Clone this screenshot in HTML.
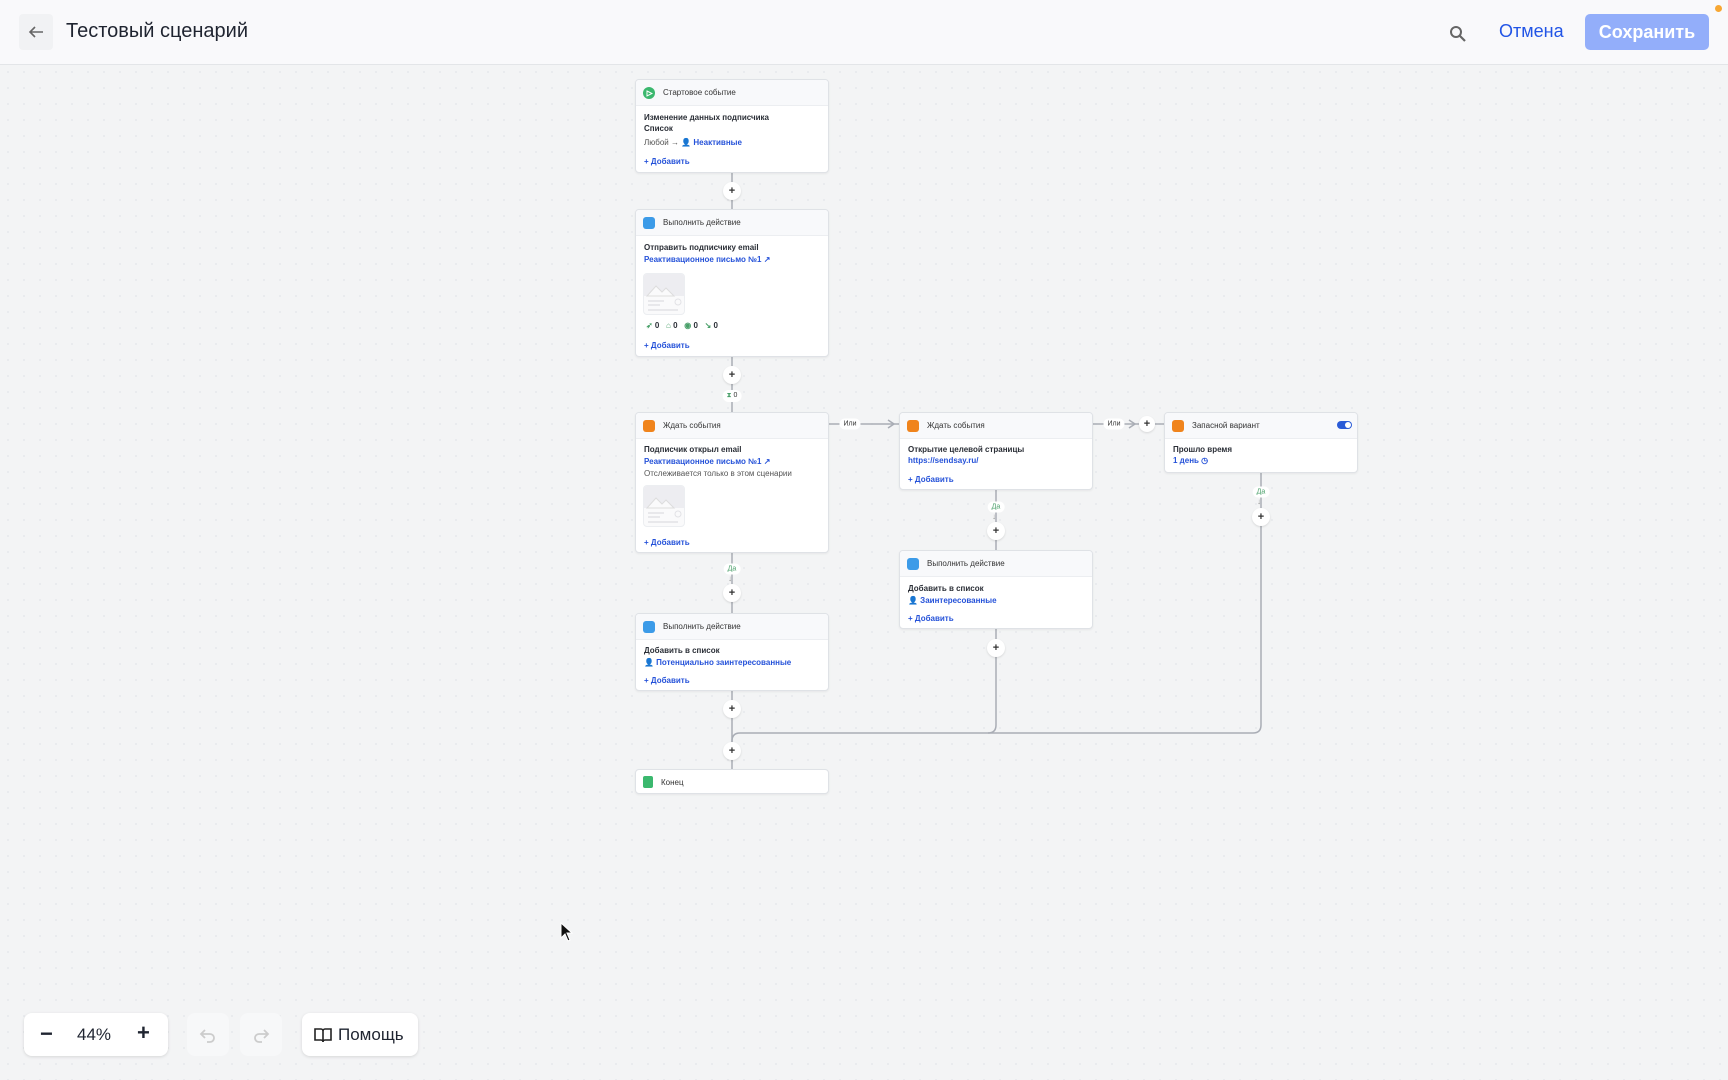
<!DOCTYPE html>
<html><head><meta charset="utf-8"><style>
*{box-sizing:border-box;margin:0;padding:0}
body{width:1728px;height:1080px;overflow:hidden;background:#f3f4f5;font-family:"Liberation Sans",sans-serif;position:relative;color:#1f2430;
background-image:radial-gradient(#e6e8eb 0.8px,transparent 0.8px);background-size:16px 16px}
.hdr{position:absolute;left:0;top:0;width:1728px;height:65px;background:#f9f9fb;border-bottom:1px solid #e3e5e8}
.a{position:absolute}
.card{position:absolute;background:#fff;border:1px solid #dfe2e6;border-radius:4px;box-shadow:0 1px 2px rgba(0,0,0,.06);overflow:hidden}
.ch{height:26px;background:#f8f9fb;border-bottom:1px solid #eceef1;position:relative;font-size:8px;color:#333;line-height:26px;padding-left:27px}
.ic{position:absolute;left:7px;top:7px;width:12px;height:12px;border-radius:3px}
.t{position:absolute;font-size:8px;white-space:nowrap;line-height:10px}
.b{font-weight:bold;color:#2a2e36}
.l{color:#2552d9;font-weight:bold}
.g{color:#555}
.vl{position:absolute;width:1.5px;background:#a9adb5}
.hl{position:absolute;height:1.5px;background:#a9adb5}
.pl{position:absolute;width:18px;height:18px;margin:-9px 0 0 -9px;border-radius:50%;background:#fff;box-shadow:0 1px 2px rgba(0,0,0,.12);font-size:11px;line-height:18px;text-align:center;color:#333;font-weight:bold}
.pill{position:absolute;background:#fff;border-radius:6px;font-size:7px;color:#4aa06a;padding:2px 4px;transform:translate(-50%,-50%)}
.pill2{position:absolute;background:#fff;border-radius:6px;font-size:7px;color:#333;padding:2px 4px;transform:translate(-50%,-50%)}
.img{position:absolute;width:42px;height:42px;border:1px solid #eceef1;border-radius:4px;background:#fafafb;overflow:hidden}
.btn{position:absolute;background:#fff;border-radius:8px;box-shadow:0 1px 3px rgba(0,0,0,.12)}
</style></head><body>
<div class="hdr">
  <div class="a" style="left:19px;top:14px;width:34px;height:36px;background:#f1f2f4;border-radius:4px"></div>
  <svg class="a" style="left:27px;top:24px" width="18" height="16" viewBox="0 0 18 16"><path d="M16 8H3M8 3L3 8l5 5" stroke="#666" stroke-width="1.6" fill="none"/></svg>
  <div class="a" style="left:66px;top:20px;font-size:20px;color:#1f2430">Тестовый сценарий</div>
  <svg class="a" style="left:1449px;top:25px" width="18" height="18" viewBox="0 0 18 18"><circle cx="7" cy="7" r="5" stroke="#666" stroke-width="2" fill="none"/><path d="M11 11l5 5" stroke="#666" stroke-width="2.2"/></svg>
  <div class="a" style="left:1499px;top:21px;font-size:18px;color:#2255e6">Отмена</div>
  <div class="a" style="left:1585px;top:14px;width:124px;height:36px;background:#93aefa;border-radius:5px;color:#fff;font-size:18px;font-weight:bold;text-align:center;line-height:36px">Сохранить</div>
  <div class="a" style="left:1715px;top:5px;width:7px;height:7px;border-radius:50%;background:#f7a733"></div>
</div>

<!-- lines -->
<svg class="a" style="left:0;top:0" width="1728" height="1080">
<g stroke="#a9adb5" stroke-width="1.5" fill="none">
<path d="M732 173V209M732 357V412M732 553V613M732 691V769"/>
<path d="M996 490V550"/>
<path d="M996 629V725Q996 733 988 733"/>
<path d="M732 745V741Q732 733 740 733H1253Q1261 733 1261 725V473"/>
<path d="M829 424H899M1093 424H1164"/>
<path d="M888 420l6 4-6 4M1129 420l6 4-6 4"/>
</g></svg>
<div class="pill2" style="left:850px;top:424px">Или</div>
<div class="pill2" style="left:1114px;top:424px">Или</div>
<div class="pl" style="left:1147px;top:424px;width:16px;height:16px;margin:-8px 0 0 -8px;line-height:16px">+</div>

<div class="pl" style="left:732px;top:191px">+</div>
<div class="pl" style="left:732px;top:375px">+</div>
<div class="pill2" style="left:732px;top:396px;color:#333"><span style="color:#4aa06a">⧗</span> 0</div>
<div class="pill" style="left:732px;top:569px">Да</div>
<div class="t" style="left:728px;top:574px;color:#999">↓</div>
<div class="pl" style="left:732px;top:593px">+</div>
<div class="pl" style="left:732px;top:709px">+</div>
<div class="pl" style="left:732px;top:751px">+</div>
<div class="pill" style="left:996px;top:507px">Да</div>
<div class="t" style="left:992px;top:512px;color:#999">↓</div>
<div class="pl" style="left:996px;top:531px">+</div>
<div class="pl" style="left:996px;top:648px">+</div>
<div class="pill" style="left:1261px;top:492px">Да</div>
<div class="t" style="left:1257px;top:497px;color:#999">↓</div>
<div class="pl" style="left:1261px;top:517px">+</div>

<!-- card1 -->
<div class="card" style="left:635px;top:79px;width:194px;height:94px">
  <div class="ch"><div class="ic" style="background:#3bb86e;border-radius:50%"></div><svg class="a" style="left:10px;top:10px" width="7" height="7"><path d="M1 1l5 2.5L1 6z" fill="none" stroke="#fff" stroke-width="1"/></svg>Стартовое событие</div>
  <div class="t b" style="left:8px;top:33px">Изменение данных подписчика</div>
  <div class="t b" style="left:8px;top:44px">Список</div>
  <div class="t g" style="left:8px;top:58px">Любой → <span class="l">👤 Неактивные</span></div>
  <div class="t l" style="left:8px;top:77px">+ Добавить</div>
</div>
<!-- card2 -->
<div class="card" style="left:635px;top:209px;width:194px;height:148px">
  <div class="ch"><div class="ic" style="background:#3c9be8"></div>Выполнить действие</div>
  <div class="t b" style="left:8px;top:33px">Отправить подписчику email</div>
  <div class="t l" style="left:8px;top:45px">Реактивационное письмо №1 ↗</div>
  <div class="img" style="left:7px;top:63px"><svg width="42" height="42"><rect x="0" y="0" width="42" height="22" fill="#ededf1"/><path d="M3 22l9-10 6 6 4-4 8 8z" fill="#fafafb" stroke="#ddd"/><path d="M4 27h16M4 31h12M4 36h30" stroke="#e2e2e6" stroke-width="1.5"/><circle cx="34" cy="28" r="3" fill="none" stroke="#e2e2e6"/></svg></div>
  <div class="t b" style="left:10px;top:111px"><span style="color:#4aa06a">➶</span> 0 &nbsp; <span style="color:#4aa06a">⌂</span> 0 &nbsp; <span style="color:#4aa06a">◉</span> 0 &nbsp; <span style="color:#4aa06a">↘</span> 0</div>
  <div class="t l" style="left:8px;top:131px">+ Добавить</div>
</div>
<!-- card3 -->
<div class="card" style="left:635px;top:412px;width:194px;height:141px">
  <div class="ch"><div class="ic" style="background:#f0841c"></div>Ждать события</div>
  <div class="t b" style="left:8px;top:32px">Подписчик открыл email</div>
  <div class="t l" style="left:8px;top:44px">Реактивационное письмо №1 ↗</div>
  <div class="t g" style="left:8px;top:56px">Отслеживается только в этом сценарии</div>
  <div class="img" style="left:7px;top:72px"><svg width="42" height="42"><rect x="0" y="0" width="42" height="22" fill="#ededf1"/><path d="M3 22l9-10 6 6 4-4 8 8z" fill="#fafafb" stroke="#ddd"/><path d="M4 27h16M4 31h12M4 36h30" stroke="#e2e2e6" stroke-width="1.5"/><circle cx="34" cy="28" r="3" fill="none" stroke="#e2e2e6"/></svg></div>
  <div class="t l" style="left:8px;top:125px">+ Добавить</div>
</div>
<!-- card4 -->
<div class="card" style="left:635px;top:613px;width:194px;height:78px">
  <div class="ch"><div class="ic" style="background:#3c9be8"></div>Выполнить действие</div>
  <div class="t b" style="left:8px;top:32px">Добавить в список</div>
  <div class="t l" style="left:8px;top:44px">👤 Потенциально заинтересованные</div>
  <div class="t l" style="left:8px;top:62px">+ Добавить</div>
</div>
<!-- end -->
<div class="card" style="left:635px;top:769px;width:194px;height:25px">
  <div class="ic" style="background:#3bb86e;border-radius:2px;top:6px;width:10px"></div>
  <div class="t" style="left:25px;top:8px;color:#333">Конец</div>
</div>
<!-- middle wait -->
<div class="card" style="left:899px;top:412px;width:194px;height:78px">
  <div class="ch"><div class="ic" style="background:#f0841c"></div>Ждать события</div>
  <div class="t b" style="left:8px;top:32px">Открытие целевой страницы</div>
  <div class="t l" style="left:8px;top:43px">https://sendsay.ru/</div>
  <div class="t l" style="left:8px;top:62px">+ Добавить</div>
</div>
<!-- middle action -->
<div class="card" style="left:899px;top:550px;width:194px;height:79px">
  <div class="ch"><div class="ic" style="background:#3c9be8"></div>Выполнить действие</div>
  <div class="t b" style="left:8px;top:33px">Добавить в список</div>
  <div class="t l" style="left:8px;top:45px">👤 Заинтересованные</div>
  <div class="t l" style="left:8px;top:63px">+ Добавить</div>
</div>
<!-- right -->
<div class="card" style="left:1164px;top:412px;width:194px;height:61px">
  <div class="ch"><div class="ic" style="background:#f0841c"></div>Запасной вариант<div class="a" style="left:172px;top:8px;width:15px;height:8px;border-radius:4px;background:#2a5bd7"><div class="a" style="right:1px;top:1px;width:6px;height:6px;border-radius:50%;background:#fff"></div></div></div>
  <div class="t b" style="left:8px;top:32px">Прошло время</div>
  <div class="t l" style="left:8px;top:43px">1 день ◷</div>
</div>

<!-- cursor -->
<svg class="a" style="left:560px;top:922px" width="14" height="20" viewBox="0 0 14 20"><path d="M1 1v15l4-4 3 7 2-1-3-7h5z" fill="#111" stroke="#fff" stroke-width="1"/></svg>

<!-- toolbar -->
<div class="btn" style="left:24px;top:1013px;width:144px;height:43px">
  <div class="a" style="left:16px;top:8px;font-size:22px;font-weight:bold">−</div>
  <div class="a" style="left:53px;top:12px;font-size:17px">44%</div>
  <div class="a" style="left:113px;top:7px;font-size:22px;font-weight:bold">+</div>
</div>
<div class="btn" style="left:187px;top:1013px;width:42px;height:43px;background:#f7f8f9;box-shadow:none"><svg class="a" style="left:12px;top:13px" width="18" height="18" viewBox="0 0 18 18"><path d="M6 4L2 8l4 4M2 8h9a4 4 0 010 8H8" stroke="#ccc" stroke-width="1.8" fill="none"/></svg></div>
<div class="btn" style="left:240px;top:1013px;width:42px;height:43px;background:#f7f8f9;box-shadow:none"><svg class="a" style="left:12px;top:13px" width="18" height="18" viewBox="0 0 18 18"><path d="M12 4l4 4-4 4M16 8H7a4 4 0 000 8h3" stroke="#ccc" stroke-width="1.8" fill="none"/></svg></div>
<div class="btn" style="left:302px;top:1013px;width:116px;height:43px">
  <svg class="a" style="left:12px;top:14px" width="18" height="16" viewBox="0 0 18 16"><path d="M1 2h6a2 2 0 012 2v11a2 2 0 00-2-2H1zM17 2h-6a2 2 0 00-2 2v11a2 2 0 012-2h6z" stroke="#222" stroke-width="1.6" fill="none"/></svg>
  <div class="a" style="left:36px;top:12px;font-size:17px">Помощь</div>
</div>
</body></html>
